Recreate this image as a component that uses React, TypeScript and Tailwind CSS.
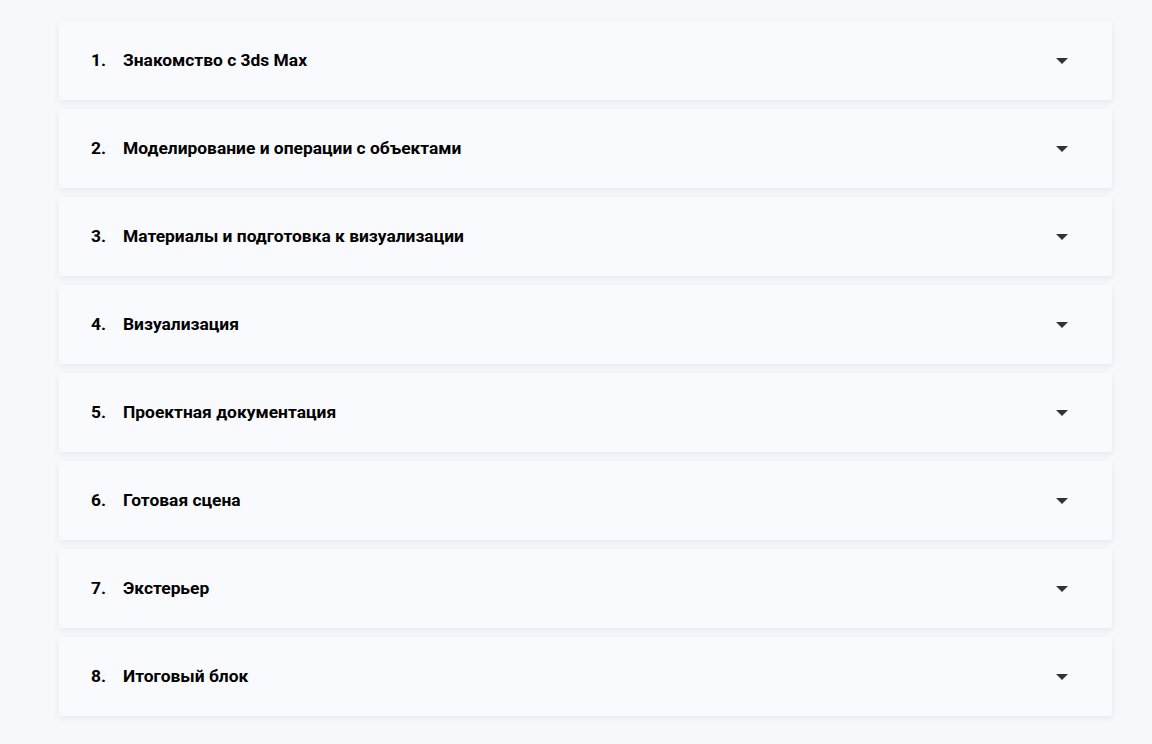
import React from 'react';

const modules = [
  'Знакомство с 3ds Max',
  'Моделирование и операции с объектами',
  'Материалы и подготовка к визуализации',
  'Визуализация',
  'Проектная документация',
  'Готовая сцена',
  'Экстерьер',
  'Итоговый блок',
];

function Caret() {
  return (
    <svg width="24" height="24" viewBox="0 0 24 24" className="shrink-0">
      <path d="M6 9l6 6 6-6z" fill="#333333" />
    </svg>
  );
}

export default function App() {
  return (
    <div className="min-h-screen bg-[#f7f8fc] pt-[21px] pl-[59px]" style={{ fontFamily: 'Roboto, "Noto Sans", sans-serif' }}>
      <div className="flex w-[1053px] flex-col gap-[9px]">
        {modules.map((title, i) => (
          <div
            key={i}
            className="flex h-[79px] items-center rounded-[2px] bg-[#f9fafe] pl-[32px] pr-[38px] shadow-[0_2px_6px_rgba(20,30,60,0.07)]"
          >
            <span className="w-[32px] text-[17.4px] font-bold text-black">{i + 1}.</span>
            <span className="flex-1 text-[17.4px] font-bold text-black">{title}</span>
            <Caret />
          </div>
        ))}
      </div>
    </div>
  );
}
